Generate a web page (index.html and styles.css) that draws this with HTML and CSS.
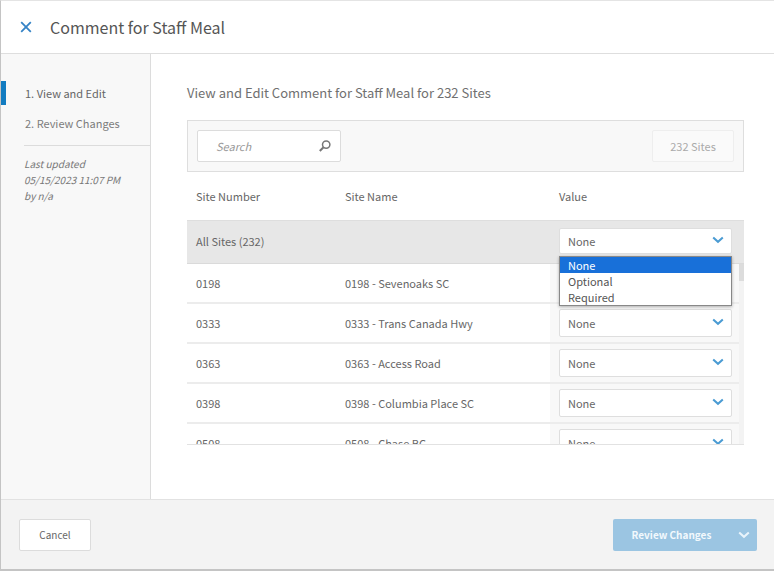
FILE: index.html
```
<!DOCTYPE html>
<html lang="en">
<head>
	<meta charset="UTF-8">
	<meta name="viewport" content="width=device-width, initial-scale=1">
	<title>Comment for Staff Meal</title>
	<link rel="stylesheet" href="styles.css">
</head>
<body>
	<svg class="sprite" aria-hidden="true">
		<symbol id="chevron" viewBox="0 0 12 8">
			<path d="M1.2 1.4 6 5.8l4.8-4.4" fill="none" stroke="currentColor" stroke-width="2"/>
		</symbol>
	</svg>
	<div class="dialog">
		<header class="dialog-header">
			<button type="button" class="close" aria-label="Close">
				<svg width="12" height="12" viewBox="0 0 12 12"><path d="M1.2 1.2l9.600 9.600M10.800 1.200l-9.600 9.600" fill="none" stroke="currentColor" stroke-width="1.800"/></svg>
			</button>
			<h1>Comment for Staff Meal</h1>
		</header>
		<div class="dialog-body">
			<aside class="sidebar">
				<nav>
					<a href="#edit" class="step active">1. View and Edit</a>
					<a href="#review" class="step">2. Review Changes</a>
				</nav>
				<p class="updated">Last updated<br>05/15/2023 11:07 PM<br>by n/a</p>
			</aside>
			<main class="content" id="edit">
				<h2>View and Edit Comment for Staff Meal for 232 Sites</h2>
				<div class="toolbar">
					<div class="search">
						<input type="text" placeholder="Search" aria-label="Search">
						<svg width="12" height="12" viewBox="0 0 12 12"><circle cx="7.200" cy="4.600" r="3.700" fill="none" stroke="currentColor" stroke-width="1.500"/><path d="M4.500 7.300L.8 11" stroke="currentColor" stroke-width="2"/></svg>
					</div>
					<button type="button" class="count" disabled>232 Sites</button>
				</div>
				<table class="sites sites-head">
					<thead>
						<tr><th class="number">Site Number</th><th class="name">Site Name</th><th>Value</th></tr>
					</thead>
					<tbody>
						<tr class="all">
							<td colspan="2">All Sites (232)</td>
							<td>
								<div class="value">
									<select aria-label="Value for all sites"><option>None</option><option>Optional</option><option>Required</option></select>
									<svg class="chevron"><use href="#chevron"/></svg>
									<ul class="menu">
										<li class="selected">None</li>
										<li>Optional</li>
										<li>Required</li>
									</ul>
								</div>
							</td>
						</tr>
					</tbody>
				</table>
				<div class="list">
					<table class="sites sites-list">
						<tbody>
							<tr>
								<td class="number">0198</td>
								<td class="name">0198 - Sevenoaks SC</td>
								<td><div class="value"><select aria-label="Value for 0198"><option>None</option><option>Optional</option><option>Required</option></select><svg class="chevron"><use href="#chevron"/></svg></div></td>
							</tr>
							<tr>
								<td class="number">0333</td>
								<td class="name">0333 - Trans Canada Hwy</td>
								<td><div class="value"><select aria-label="Value for 0333"><option>None</option><option>Optional</option><option>Required</option></select><svg class="chevron"><use href="#chevron"/></svg></div></td>
							</tr>
							<tr>
								<td class="number">0363</td>
								<td class="name">0363 - Access Road</td>
								<td><div class="value"><select aria-label="Value for 0363"><option>None</option><option>Optional</option><option>Required</option></select><svg class="chevron"><use href="#chevron"/></svg></div></td>
							</tr>
							<tr>
								<td class="number">0398</td>
								<td class="name">0398 - Columbia Place SC</td>
								<td><div class="value"><select aria-label="Value for 0398"><option>None</option><option>Optional</option><option>Required</option></select><svg class="chevron"><use href="#chevron"/></svg></div></td>
							</tr>
							<tr>
								<td class="number">0508</td>
								<td class="name">0508 - Chase BC</td>
								<td><div class="value"><select aria-label="Value for 0508"><option>None</option><option>Optional</option><option>Required</option></select><svg class="chevron"><use href="#chevron"/></svg></div></td>
							</tr>
						</tbody>
					</table>
					<div class="track"><div class="thumb"></div></div>
				</div>
			</main>
		</div>
		<footer class="dialog-footer">
			<button type="button" class="cancel">Cancel</button>
			<div class="split">
				<button type="button" class="review" disabled>Review Changes</button>
				<button type="button" class="more" aria-label="More actions" disabled><svg class="chevron"><use href="#chevron"/></svg></button>
			</div>
		</footer>
	</div>
</body>
</html>
```
FILE: styles.css
```
*{
	box-sizing: border-box;
}
body,h1,h2,p,ul{
	margin: 0;
	padding: 0;
}
body,button,input,select{
	font-family: "Noto Sans CJK SC", "Noto Sans", sans-serif;
	font-size: 11px;
	line-height: 16px;
	color: #666;
}
button,input,select{
	margin: 0;
}
.sprite{
	display: none;
}
.chevron{
	display: block;
	width: 12px;
	height: 8px;
	color: #4a9bd3;
}

.dialog{
	display: flex;
	flex-direction: column;
	height: 100vh;
	border: 1px solid #c4c4c4;
	border-width: 1px 0 2px 1px;
	border-top-color: #e4e4e4;
	background: #fff;
}
.dialog-header{
	display: flex;
	align-items: center;
	flex: none;
	gap: 18px;
	height: 53px;
	padding-left: 19px;
	border-bottom: 1px solid #dedede;
}
.close{
	padding: 0;
	border: 0;
	background: none;
	color: #3583c6;
}
.close svg{
	display: block;
}
h1{
	font-size: 16px;
	font-weight: 400;
	line-height: 24px;
	color: #555;
}
.dialog-body{
	display: flex;
	flex: 1;
	min-height: 0;
}

.sidebar{
	flex: none;
	width: 150px;
	padding-top: 27px;
	border-right: 1px solid #dcdcdc;
	background: #f8f8f8;
}
.step{
	display: block;
	margin-bottom: 6px;
	padding-left: 24px;
	line-height: 24px;
	color: #7c7c7c;
	text-decoration: none;
}
.step.active{
	padding-left: 19px;
	border-left: 5px solid #127cc1;
	color: #666;
}
.updated{
	margin: 10px 0 0 23px;
	padding-top: 10px;
	border-top: 1px solid #dcdcdc;
	font-size: 10px;
	font-style: italic;
	color: #777;
}

.content{
	display: flex;
	flex: 1;
	flex-direction: column;
	min-width: 0;
	padding: 29px 30px 54px 36px;
}
h2{
	font-size: 13px;
	font-weight: 400;
	line-height: 20px;
	color: #707070;
}
.toolbar{
	display: flex;
	flex: none;
	align-items: center;
	justify-content: space-between;
	height: 52px;
	margin-top: 17px;
	padding: 0 9px;
	border: 1px solid #dedede;
	background: #f8f8f8;
}
.search{
	display: flex;
	align-items: center;
	width: 144px;
	height: 32px;
	padding: 0 9px 0 18px;
	border: 1px solid #dcdcdc;
	border-radius: 2px;
	background: #fff;
	color: #777;
}
.search input{
	flex: 1;
	min-width: 0;
	padding: 0;
	border: 0;
	outline: none;
	background: none;
}
.search input::placeholder{
	font-style: italic;
	color: #999;
}
.count{
	width: 82px;
	height: 32px;
	padding: 0;
	border: 1px solid #eee;
	border-radius: 2px;
	background: #fafafa;
	color: #aaa;
}

.sites{
	width: 100%;
	border-collapse: separate;
	border-spacing: 0;
	table-layout: fixed;
}
.sites th,.sites td{
	padding: 0 0 0 9px;
	font-weight: 400;
	text-align: left;
}
.sites th{
	height: 48px;
}
.sites .number{
	width: 149px;
}
.sites th:last-child,.sites td:last-child{
	width: 194px;
}
.sites .all td{
	height: 44px;
	padding-bottom: 3px;
	border-top: 1px solid #dedede;
	border-bottom: 1px solid #dadada;
	background: #e7e7e7;
}
.value{
	position: relative;
	width: 173px;
}
.value select{
	display: block;
	width: 100%;
	height: 28px;
	padding: 0 8px;
	border: 1px solid #dedede;
	border-radius: 2px;
	background: #fff;
	appearance: none;
}
.value .chevron{
	position: absolute;
	top: 9px;
	right: 8px;
	pointer-events: none;
}
.value .menu{
	position: absolute;
	top: 28px;
	left: 0;
	z-index: 1;
	width: 100%;
	border: 1px solid #888;
	background: #fff;
	box-shadow: 0 1px 3px rgba(0,0,0,0.3);
	list-style: none;
}
.all .value select{
	height: 26px;
}
.all .value .chevron{
	top: 8px;
}
.menu li{
	padding-left: 8px;
	color: #555;
}
.menu .selected{
	background: #1870d9;
	color: #fff;
}

.list{
	display: flex;
	flex: 1;
	align-items: flex-start;
	min-height: 0;
	overflow: hidden;
	border-bottom: 1px solid #e2e2e2;
}
.sites-list{
	flex: 1;
}
.sites-list td{
	height: 40px;
	border-bottom: 2px solid #ececec;
}
.sites-list td:last-child{
	width: 189px;
	background: #f8f8f8;
}
.track{
	flex: none;
	align-self: stretch;
	width: 5px;
	background: #f3f3f3;
}
.thumb{
	height: 17px;
	background: #dcdcdc;
}

.dialog-footer{
	display: flex;
	flex: none;
	align-items: center;
	justify-content: space-between;
	height: 70px;
	padding: 0 17px 0 18px;
	border-top: 1px solid #e2e2e2;
	background: #f3f3f3;
}
.cancel,.review{
	font-size: 10px;
}
.cancel{
	width: 72px;
	height: 32px;
	padding: 0;
	border: 1px solid #dcdcdc;
	border-radius: 2px;
	background: #fff;
}
.split{
	display: flex;
	border-radius: 2px;
	background: #9bc5e2;
}
.split button{
	height: 32px;
	padding: 0;
	border: 0;
	background: none;
	color: #f2f9fd;
}
.split .review{
	width: 117px;
	font-weight: 700;
}
.split .more{
	width: 27px;
}
.more .chevron{
	margin: 0 auto;
	color: #e9f4fb;
}
```
